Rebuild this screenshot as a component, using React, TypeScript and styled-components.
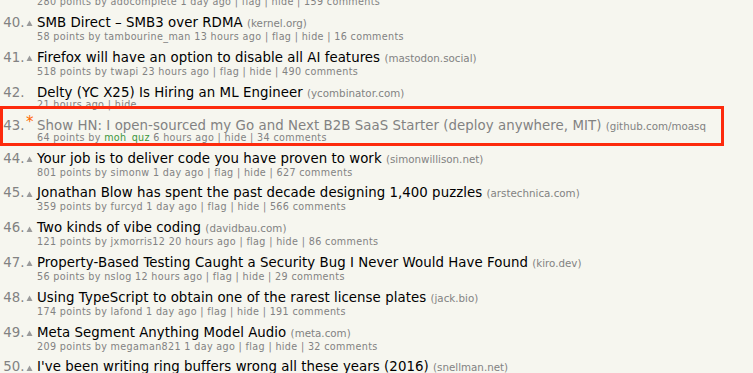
import React from "react";
import styled, { createGlobalStyle } from "styled-components";

const GlobalStyle = createGlobalStyle`
  html, body {
    margin: 0;
    padding: 0;
    background: #f6f6ef;
  }
`;

type Story = {
  rank: number;
  title: string;
  site?: string;
  points?: number;
  user?: string;
  newUser?: boolean;
  age: string;
  comments?: number;
  flag?: boolean;
  job?: boolean;
  own?: boolean;
};

const stories: Story[] = [
  { rank: 40, title: "SMB Direct \u2013 SMB3 over RDMA", site: "kernel.org", points: 58, user: "tambourine_man", age: "13 hours ago", comments: 16, flag: true },
  { rank: 41, title: "Firefox will have an option to disable all AI features", site: "mastodon.social", points: 518, user: "twapi", age: "23 hours ago", comments: 490, flag: true },
  { rank: 42, title: "Delty (YC X25) Is Hiring an ML Engineer", site: "ycombinator.com", age: "21 hours ago", job: true },
  { rank: 43, title: "Show HN: I open-sourced my Go and Next B2B SaaS Starter (deploy anywhere, MIT)", site: "github.com/moasq", points: 64, user: "moh_quz", newUser: true, age: "6 hours ago", comments: 34, own: true },
  { rank: 44, title: "Your job is to deliver code you have proven to work", site: "simonwillison.net", points: 801, user: "simonw", age: "1 day ago", comments: 627, flag: true },
  { rank: 45, title: "Jonathan Blow has spent the past decade designing 1,400 puzzles", site: "arstechnica.com", points: 359, user: "furcyd", age: "1 day ago", comments: 566, flag: true },
  { rank: 46, title: "Two kinds of vibe coding", site: "davidbau.com", points: 121, user: "jxmorris12", age: "20 hours ago", comments: 86, flag: true },
  { rank: 47, title: "Property-Based Testing Caught a Security Bug I Never Would Have Found", site: "kiro.dev", points: 56, user: "nslog", age: "12 hours ago", comments: 29, flag: true },
  { rank: 48, title: "Using TypeScript to obtain one of the rarest license plates", site: "jack.bio", points: 174, user: "lafond", age: "1 day ago", comments: 191, flag: true },
  { rank: 49, title: "Meta Segment Anything Model Audio", site: "meta.com", points: 209, user: "megaman821", age: "1 day ago", comments: 32, flag: true },
  { rank: 50, title: "I've been writing ring buffers wrong all these years (2016)", site: "snellman.net", points: 312, user: "flaghacker", age: "1 day ago", comments: 140, flag: true },
];

function VoteArrow() {
  return (
    <svg width="10" height="10" viewBox="0 0 10 10" style={{ display: "block" }}>
      <polygon points="1.5,9 4.5,3.4 7.5,9" fill="#9a9a9a" />
    </svg>
  );
}

function Subline({ s }: { s: Story }) {
  if (s.job) {
    return <Sub>{s.age} | hide</Sub>;
  }
  return (
    <Sub>
      {s.points} points by <User $new={s.newUser}>{s.user}</User> {s.age}
      {s.flag ? " | flag" : ""} | hide | {s.comments} comments
    </Sub>
  );
}

type Kind = "story" | "job" | "own";

// title row is shorter when there is no vote arrow in it
const rowHeight: Record<Kind, string> = { story: "19px", job: "17.5px", own: "17.1px" };
const lineH: Record<Kind, string> = { story: "16px", job: "15px", own: "13px" };
const textPad: Record<Kind, string> = { story: "2px", job: "2.5px", own: "3.8px" };

function Item({ s }: { s: Story }) {
  const kind: Kind = s.own ? "own" : s.job ? "job" : "story";
  return (
    <ItemRow $kind={kind}>
      <Rank $kind={kind}>{s.rank}.</Rank>
      <Vote>{s.own ? <Star>*</Star> : s.job ? null : <VoteArrow />}</Vote>
      <TitleLine $kind={kind}>
        {s.title} {s.site && <Site>({s.site}{s.own ? "" : ")"}</Site>}
      </TitleLine>
      <Subline s={s} />
    </ItemRow>
  );
}

export default function App() {
  return (
    <>
      <GlobalStyle />
      <Page>
        <List>
          <TailRow>
            <Sub>280 points by adocomplete 1 day ago | flag | hide | 159 comments</Sub>
          </TailRow>
          {stories.map((s) => (
            <Item key={s.rank} s={s} />
          ))}
        </List>
      </Page>
    </>
  );
}

const Page = styled.div`
  width: 753px;
  height: 373px;
  overflow: hidden;
  font-family: "DejaVu Sans", Verdana, sans-serif;
`;

const List = styled.div`
  display: flex;
  flex-direction: column;
  margin-top: -3px;
`;

const TailRow = styled.div`
  display: grid;
  grid-template-columns: 25px 12px 1fr;
  padding-bottom: 5px;
  white-space: nowrap;
`;

const ItemRow = styled.div<{ $kind: Kind }>`
  position: relative;
  display: grid;
  grid-template-columns: 25px 12px 1fr;
  grid-template-rows: ${(p) => rowHeight[p.$kind]} auto;
  padding-bottom: 5px;
  white-space: nowrap;

  ${(p) =>
    p.$kind === "own" &&
    `
    &::after {
      content: "";
      position: absolute;
      left: 0;
      right: 29px;
      top: -9.5px;
      bottom: 3px;
      border: 3px solid #fd2a0c;
      pointer-events: none;
    }
  `}
`;

const Rank = styled.div<{ $kind: Kind }>`
  grid-column: 1;
  grid-row: 1;
  text-align: right;
  font-size: 13.33px;
  line-height: ${(p) => lineH[p.$kind]};
  padding-top: ${(p) => textPad[p.$kind]};
  padding-right: 0.5px;
  color: #828282;
`;

const Vote = styled.div`
  grid-column: 2;
  grid-row: 1;
  display: flex;
  align-items: flex-start;
  padding-top: 4.5px;
`;

const Star = styled.span`
  color: #ff6600;
  font-size: 15px;
  line-height: 14px;
  margin-top: -5px;
  margin-left: 1px;
`;

const TitleLine = styled.div<{ $kind: Kind }>`
  grid-column: 3;
  grid-row: 1;
  font-size: 13.33px;
  letter-spacing: 0.05px;
  line-height: ${(p) => lineH[p.$kind]};
  padding-top: ${(p) => textPad[p.$kind]};
  color: ${(p) => (p.$kind === "own" ? "#828282" : "#000000")};
`;

const Site = styled.span`
  font-size: 10.3px;
  letter-spacing: 0;
  color: #828282;
`;

const Sub = styled.div`
  grid-column: 3;
  font-size: 9.6px;
  letter-spacing: 0.35px;
  line-height: 10.8px;
  color: #828282;
`;

const User = styled.span<{ $new?: boolean }>`
  color: ${(p) => (p.$new ? "#3c963c" : "#828282")};
`;
